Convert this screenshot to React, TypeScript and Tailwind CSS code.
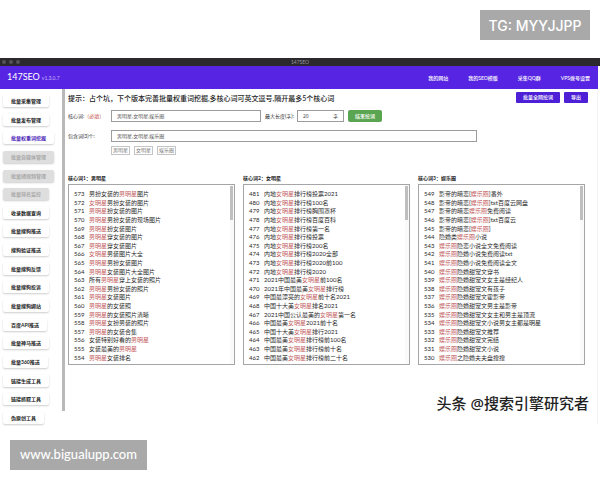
import { useState } from "react";

// Types
interface KeywordList {
  title: string;
  highlight: string[];
  start: number;
  words: string[];
}

interface SidebarItem {
  label: string;
  disabled?: boolean;
}

const NAV_LINKS = ["我的网站", "我的SEO模版", "采集QQ群", "VPS拨号设置"];

const SIDEBAR_ITEMS: SidebarItem[] = [
  { label: "批量采集管理" },
  { label: "批量发布管理" },
  { label: "批量权重词挖掘" },
  { label: "批量自媒体管理", disabled: true },
  { label: "批量短视频管理", disabled: true },
  { label: "批量排名监控", disabled: true },
  { label: "收录数据查询" },
  { label: "批量搜狗推送" },
  { label: "搜狗验证推送" },
  { label: "批量搜狗反馈" },
  { label: "批量搜狗投诉" },
  { label: "批量搜狗绑站" },
  { label: "百度API推送" },
  { label: "批量神马推送" },
  { label: "批量360推送" },
  { label: "链接生成工具" },
  { label: "链接抓取工具" },
  { label: "伪原创工具" },
];

const KEYWORDS = ["男明星", "女明星", "娱乐圈"];

const LISTS: KeywordList[] = [
  {
    title: "核心词1：男明星",
    highlight: ["男明星", "女明星"],
    start: 573,
    words: [
      "男扮女装的男明星图片",
      "女明星男扮女装的图片",
      "男明星扮女装的图片",
      "男明星男扮女装的现场图片",
      "男明星扮女装图片",
      "男明星穿女装的图片",
      "男明星穿女装图片",
      "女明星男装图片大全",
      "男明星男扮女装图片",
      "男明星女装图片大全图片",
      "所有男明星穿上女装的照片",
      "男明星男扮女装的照片",
      "男明星女装图片",
      "男明星的女装照",
      "男明星的女装照片清晰",
      "男明星女扮男装的照片",
      "男明星的女装合集",
      "女装特别好看的男明星",
      "女装最美的男明星",
      "男明星女装排名",
    ],
  },
  {
    title: "核心词2：女明星",
    highlight: ["女明星"],
    start: 481,
    words: [
      "内地女明星排行榜投票2021",
      "内地女明星排行榜100名",
      "内地女明星排行榜胸围罩杯",
      "内地女明星排行榜百度百科",
      "内地女明星排行榜第一名",
      "内地女明星排行榜投票",
      "内地女明星排行榜200名",
      "内地女明星排行榜2020全部",
      "内地女明星排行榜2020前100",
      "内地女明星排行榜2020",
      "2021中国最美女明星前100名",
      "2021年中国最美女明星排行榜",
      "中国最漂亮的女明星前十名2021",
      "中国十大美女明星排名2021",
      "2021中国公认最美的女明星第一名",
      "中国最美女明星2021前十名",
      "中国十大美女明星排行2021",
      "中国最美女明星排行榜前100名",
      "中国最美女明星排行榜前十名",
      "中国最美女明星排行榜前二十名",
    ],
  },
  {
    title: "核心词3：娱乐圈",
    highlight: ["娱乐圈"],
    start: 549,
    words: [
      "影帝的暗恋[娱乐圈]番外",
      "影帝的暗恋[娱乐圈]txt百度云网盘",
      "影帝的暗恋娱乐圈免费阅读",
      "影帝的暗恋[娱乐圈]txt百度云",
      "影帝的暗恋[娱乐圈]",
      "隐婚类娱乐圈小说",
      "娱乐圈隐恋小说全文免费阅读",
      "娱乐圈隐婚小说免费阅读txt",
      "娱乐圈隐婚小说免费阅读全文",
      "娱乐圈隐婚甜宠文穿书",
      "娱乐圈隐婚甜宠文女主是经纪人",
      "娱乐圈隐婚甜宠文有孩子",
      "娱乐圈隐婚甜宠文霍影帝",
      "娱乐圈隐婚甜宠文男主是影帝",
      "娱乐圈隐婚甜宠文女主和男主是顶流",
      "娱乐圈隐婚甜宠文小说男女主都是明星",
      "娱乐圈隐婚甜宠文推荐",
      "娱乐圈隐婚甜宠文完结",
      "娱乐圈隐婚甜宠文小说",
      "娱乐圈之隐婚夫夫盘搜搜",
    ],
  },
];

// Sub-components
const Phrase: React.FC<{ text: string; highlight: string[] }> = ({
  text,
  highlight,
}) => {
  const parts = text.split(new RegExp(`(${highlight.join("|")})`));
  return (
    <span>
      {parts.map((part, i) =>
        highlight.includes(part) ? (
          <span key={i} className="text-[#c4605f]">
            {part}
          </span>
        ) : (
          part
        )
      )}
    </span>
  );
};

const KeywordPanel: React.FC<{ list: KeywordList }> = ({ list }) => (
  <section className="min-w-0">
    <h2 className="mb-[2px] text-[5px] leading-[8px] font-bold">
      {list.title}
    </h2>
    <div className="relative h-[181px] overflow-hidden border border-[#a5a5a8] bg-white">
      <ul className="flex h-full flex-col pt-[5px] pb-[2px] pl-[5px]">
        {list.words.map((word, i) => (
          <li
            key={word}
            className="flex flex-1 items-center gap-[4px] text-[6px] leading-[8px] whitespace-nowrap text-[#2a2a2a]"
          >
            <span className="w-[11px]">{list.start - i}</span>
            <Phrase text={word} highlight={list.highlight} />
          </li>
        ))}
      </ul>
      <div className="absolute inset-y-0 right-0 w-[4px] bg-[#fafafa]">
        <div className="mt-px h-[34px] w-[3px] bg-[#bfbfbf]" />
      </div>
    </div>
  </section>
);

const Sidebar: React.FC = () => {
  const [active, setActive] = useState("批量权重词挖掘");
  return (
    <aside className="flex w-[65px] shrink-0">
      <nav className="flex flex-1 flex-col items-start justify-between pt-[6px] pl-[3px]">
        {SIDEBAR_ITEMS.map(({ label, disabled }) => (
          <button
            key={label}
            type="button"
            disabled={disabled}
            onClick={() => setActive(label)}
            className={`rounded-[2px] px-2 text-[5px] leading-[12px] font-bold whitespace-nowrap shadow-[0_1px_2px_rgba(0,0,0,0.2)] ${
              disabled
                ? "bg-[#dedede] text-[#a9a9a9]"
                : label === active
                  ? "bg-white text-[#4b22b5]"
                  : "bg-white text-[#222]"
            }`}
          >
            {label}
          </button>
        ))}
      </nav>
      <div className="mb-[13px] w-[3px] bg-[#b9b9bb]" />
    </aside>
  );
};

// Main component
const App: React.FC = () => {
  return (
    <div className="flex min-h-screen flex-col bg-white font-['Lato','Noto_Sans_CJK_SC',sans-serif] text-[#222]">
      <div className="flex h-[58px] items-start justify-end px-[10px] pt-[10px]">
        <div className="flex h-[30px] w-[110px] items-center justify-center bg-[#a9a9a9] font-['Inter','Liberation_Sans',sans-serif] text-[14px] font-medium whitespace-nowrap text-white">
          TG: MYYJJPP
        </div>
      </div>

      <div className="relative">
        <div className="grid h-[8px] grid-cols-3 items-center bg-[#2b292e]">
          <div className="flex gap-[3px] pl-[2px]">
            <span className="size-[4px] rounded-full bg-[#555358]" />
            <span className="size-[4px] rounded-full bg-[#555358]" />
            <span className="size-[4px] rounded-full bg-[#555358]" />
          </div>
          <div className="text-center text-[5px] leading-[8px] text-[#99979c]">
            147SEO
          </div>
        </div>

        <header className="mr-[2px] flex h-[23px] items-center bg-[#5724e3] pr-[8px] pl-[7px] text-white">
          <h1 className="flex items-baseline gap-[2px] text-[9px] leading-[14px]">
            147SEO
            <small className="text-[5px] text-[#c4b3f7]">v1.3.0.7</small>
          </h1>
          <nav className="ml-auto flex gap-[20px] text-[5px] leading-[8px] font-medium">
            {NAV_LINKS.map((link) => (
              <a key={link} href="#" className="whitespace-nowrap">
                {link}
              </a>
            ))}
          </nav>
        </header>

        <div className="mr-[2px] flex border-r border-[#f3f3f5]">
          <Sidebar />

          <main className="min-w-0 flex-1 pt-[3px] pr-[9px] pb-[59px] pl-[3px]">
            <div className="flex items-start justify-between">
              <p className="text-[7px] leading-[12px] font-medium whitespace-nowrap">
                提示：占个坑，下个版本完善批量权重词挖掘,多核心词可英文逗号,隔开最多5个核心词
              </p>
              <div className="flex gap-1 text-[5px] leading-[11px] font-medium text-white">
                <button
                  type="button"
                  className="rounded-[1px] bg-[#4d1fd6] px-[7px]"
                >
                  批量全网挖词
                </button>
                <button
                  type="button"
                  className="rounded-[1px] bg-[#4d1fd6] px-[7px]"
                >
                  导出
                </button>
              </div>
            </div>

            <form
              className="mt-[6px] text-[5px] leading-[8px] text-[#333]"
              onSubmit={(e) => e.preventDefault()}
            >
              <div className="flex h-3 items-stretch">
                <label htmlFor="core" className="w-[43px] self-center">
                  核心词:<span className="text-[#c4504b]">（必填）</span>
                </label>
                <input
                  id="core"
                  defaultValue="男明星,女明星,娱乐圈"
                  className="w-[150px] border border-[#9c9c9f] px-[5px] text-[#555]"
                />
                <label
                  htmlFor="max"
                  className="mx-1 w-[28px] self-center whitespace-nowrap"
                >
                  最大长度(字):
                </label>
                <div className="flex w-[47px] items-center border border-[#9c9c9f] px-[5px]">
                  <input
                    id="max"
                    defaultValue="20"
                    className="w-0 flex-1 font-['Noto_Sans',sans-serif] text-[#444]"
                  />
                  <span>字</span>
                </div>
                <button
                  type="submit"
                  className="ml-1 rounded-[2px] bg-[#5aa552] px-[7px] font-medium text-white"
                >
                  结束挖词
                </button>
              </div>

              <div className="mt-2 flex h-3 items-stretch">
                <label htmlFor="include" className="w-[43px] self-center">
                  包含词(3)个:
                </label>
                <input
                  id="include"
                  defaultValue="男明星,女明星,娱乐圈"
                  className="w-[366px] border border-[#9c9c9f] px-[5px] text-[#555]"
                />
              </div>

              <ul className="mt-1 ml-[43px] flex gap-1 text-[#777]">
                {KEYWORDS.map((word) => (
                  <li
                    key={word}
                    className="border border-[#c4c4c6] px-[1px] leading-[7px]"
                  >
                    {word}
                  </li>
                ))}
              </ul>
            </form>

            <div className="mt-[19px] mr-[3px] grid grid-cols-3 gap-2">
              {LISTS.map((list) => (
                <KeywordPanel key={list.title} list={list} />
              ))}
            </div>
          </main>
        </div>

        <div className="absolute right-[11px] bottom-[10px] font-['Noto_Sans','Noto_Sans_CJK_SC',sans-serif] text-[15px] leading-[22px] font-medium whitespace-nowrap text-[#222] [text-shadow:-1px_-1px_0_#fff]">
          头条 @搜索引擎研究者
        </div>
      </div>

      <div className="flex px-[10px] pt-[16px]">
        <div className="flex h-[30px] w-[137px] items-center justify-center bg-[#a9a9a9] text-[13px] font-medium whitespace-nowrap text-white">
          www.bigualupp.com
        </div>
      </div>
    </div>
  );
};

export default App;
